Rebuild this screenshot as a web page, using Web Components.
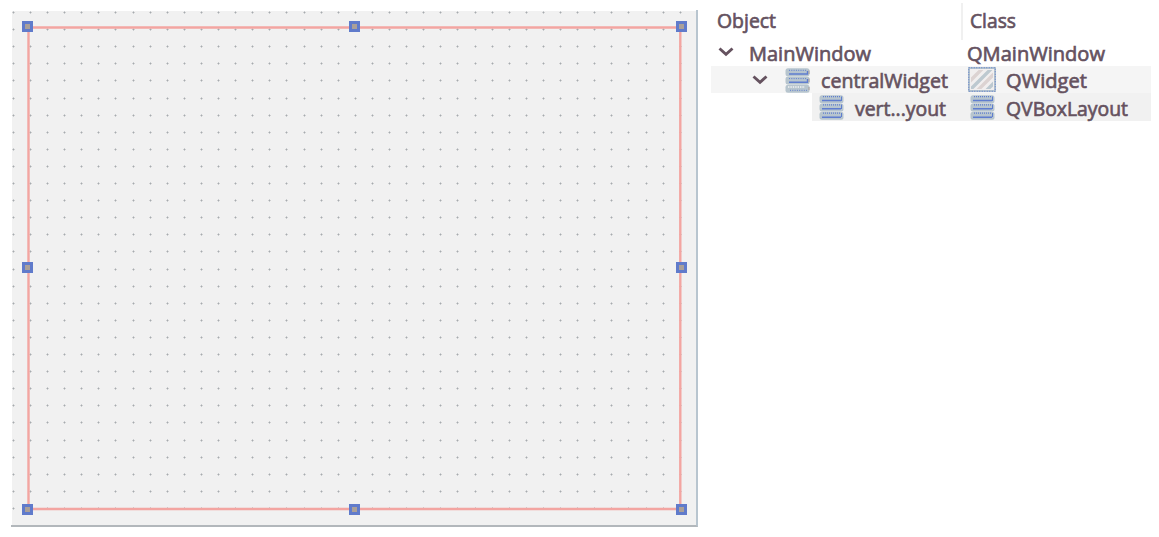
<!DOCTYPE html>
<html lang="en"><head><meta charset="utf-8"><title>Form designer</title>
<style>html,body{margin:0;background:#fff}body{width:1159px;height:537px;overflow:hidden;font-family:"Open Sans","Noto Sans",sans-serif;color:#65525f}</style></head>
<body><designer-app></designer-app>
<script>
const define=(name,html,setup)=>customElements.define(name,class extends HTMLElement{
  connectedCallback(){
    if(this.shadowRoot)return;
    const t=document.createElement('template');t.innerHTML=html;
    this.attachShadow({mode:'open'}).append(t.content.cloneNode(true));
    if(setup)setup.call(this,this.shadowRoot);
  }
});

define('fit-label',`<style>:host{display:block;height:27px;flex:none}svg{display:block;overflow:visible}text{font:19.6px "Open Sans","Noto Sans",sans-serif;fill:#65525f;stroke:#65525f;stroke-width:.65px}</style><svg height="27"><text x="0" y="21.5" lengthAdjust="spacingAndGlyphs"></text></svg>`,
function(r){const w=this.getAttribute('width');this.style.width=w+'px';r.querySelector('svg').setAttribute('width',w);
  const t=r.querySelector('text');t.setAttribute('textLength',w);t.textContent=this.getAttribute('text');});

define('tree-arrow',`<style>:host{display:block;flex:none;width:16px;height:10px}svg{display:block}</style>
<svg width="16" height="10"><path d="M1.5 1.5 8 7.3 14.5 1.5" fill="none" stroke="#65525f" stroke-width="2.9"/></svg>`);

define('layout-icon',`<style>:host{display:block;flex:none;width:25px;height:25px}svg{display:block}:host([light]) .leaf{display:none}:host(:not([light])) .group{display:none}</style>
<svg width="25" height="25"><g fill="#b7c5ce"><rect x=".5" y=".3" width="24" height="8" rx="2.5"/><rect x=".5" y="8.5" width="24" height="8" rx="2.5"/><rect x=".5" y="16.7" width="24" height="8" rx="2.5"/></g>
<g fill="none" stroke="#5f7dcf"><g class="leaf"><path d="M3 5.5H22M3 13.7H22M3 22.3H22" stroke-width="1.6"/><path d="M4 1.6H22M4 9.8H22M4 18.2H22" stroke-width="1.3" stroke-dasharray="1 1"/><path d="M22.5 1.5V6M22.5 9.5V14M22.5 18V22"/></g>
<g class="group"><path d="M4 6H22.5V3M4 14.3H22.5V11" stroke-width="1.4"/><path d="M4 2.3H22M4 10.6H22M5 22.3H22" stroke-width="1" stroke-dasharray="1 1.3"/><path d="M3 19H20" stroke="#f4f4f4" stroke-width="1.6" stroke-dasharray="1.4 1"/><path d="M24 2.5V6M24 10.5V14M24 19V22" stroke="#a99f9b"/></g></g></svg>`);

define('widget-icon',`<style>:host{display:block;flex:none;width:28px;height:25px}svg{display:block}</style>
<svg width="28" height="25"><defs><clipPath id="c"><rect x="3" y="3" width="22" height="19"/></clipPath></defs><rect x="1" y="1" width="26" height="23" fill="#f1efef" stroke="#b5c4ce" stroke-width="2"/>
<g clip-path="url(#c)" fill="none" stroke-width="3.4"><path d="M-1 17 17-1M6 27 29 4" stroke="#dcd3d2"/><path d="M-1 26 26-1M15 27 30 12" stroke="#bdc9d0"/></g>
<rect x=".75" y=".75" width="26.5" height="23.5" fill="none" stroke="#5b7bd0" stroke-width="1" stroke-dasharray="1 1.5"/></svg>`);

define('resize-handle',`<style>:host{display:block;box-sizing:border-box;width:11px;height:11px;background:#aaa099;border:3px solid #607bcb}</style>`);

define('form-canvas',`<style>
:host{display:block;box-sizing:border-box;width:687px;height:517px;position:relative;background:linear-gradient(#f1f1f1,#f1f1f1) 1px 1px no-repeat;border-right:2px solid #b8c5cf;border-bottom:2px solid #b2b7bb;overflow:hidden}
svg{display:block}
resize-handle{position:absolute}
</style>
<svg width="685" height="515"><g class="dots"></g>
<path d="M17.5 17.5V499H669.3V17.5Z" fill="none" stroke="#f3a5a1" stroke-width="2.4"/></svg>`,
function(r){
  const g=r.querySelector('.dots');let s='';
  for(let j=0;j<30;j++)for(let i=0;i<40;i++){
    const x=Math.round(1.8+i*17.1),y=Math.round(2+j*17.1);
    if(x>671||y>500)continue;
    s+='<path d="M'+(x-1)+' '+y+'h3v1h-3z" fill="#cfcfd0"/><path d="M'+x+' '+(y-.5)+'h1v2h-1z" fill="#a6abaf"/>';
  }
  g.innerHTML=s;
  for(const y of[11,252,494])for(const x of[11,338,664.5]){
    if(x===338&&y===252)continue;
    const h=document.createElement('resize-handle');h.style.left=x+'px';h.style.top=y+'px';r.append(h);
  }
});

define('tree-row',`<style>:host{display:grid;grid-template-columns:250px 190px;height:27.5px}.cell{display:flex;align-items:center;min-width:0}</style>
<div class="cell"><slot name="object"></slot></div><div class="cell"><slot name="class"></slot></div>`);

define('object-tree',`<style>
:host{display:block;width:440px;padding-top:3px}
.head{height:37px;background:linear-gradient(#f0f0f0,#f0f0f0) 250px 0/2px 37px no-repeat}
.head fit-label{margin-top:-4px}
.mid{height:27px;background:#f5f5f5}
.leaf{height:28px;background:linear-gradient(#f1f1f1,#f1f1f1) 101px 0/339px 28px no-repeat}
.main{height:26px}
.main fit-label{margin-top:-2px}
</style>
<tree-row class="head"><fit-label slot="object" text="Object" width="59" style="margin-left:6px"></fit-label><fit-label slot="class" text="Class" width="46" style="margin-left:9px"></fit-label></tree-row>
<tree-row class="main"><tree-arrow slot="object" style="margin-left:7px;margin-top:-2px"></tree-arrow><fit-label slot="object" text="MainWindow" width="122" style="margin-left:15px"></fit-label><fit-label slot="class" text="QMainWindow" width="138" style="margin-left:6px"></fit-label></tree-row>
<tree-row class="mid"><tree-arrow slot="object" style="margin-left:41px"></tree-arrow><layout-icon light slot="object" style="margin-left:17px;margin-top:1px"></layout-icon><fit-label slot="object" text="centralWidget" width="127" style="margin-left:11px"></fit-label><widget-icon slot="class" style="margin-left:7px"></widget-icon><fit-label slot="class" text="QWidget" width="81" style="margin-left:10px"></fit-label></tree-row>
<tree-row class="leaf"><layout-icon slot="object" style="margin-left:108px"></layout-icon><fit-label slot="object" text="vert...yout" width="91" style="margin-left:11px"></fit-label><layout-icon slot="class" style="margin-left:9px"></layout-icon><fit-label slot="class" text="QVBoxLayout" width="122" style="margin-left:11px"></fit-label></tree-row>`);

define('designer-app',`<style>:host{display:flex;align-items:flex-start;box-sizing:border-box;width:1159px;height:537px;padding-left:11px;gap:13px;background:#fff}form-canvas{flex:none;margin-top:10px}</style><form-canvas></form-canvas><object-tree></object-tree>`);
</script></body></html>
